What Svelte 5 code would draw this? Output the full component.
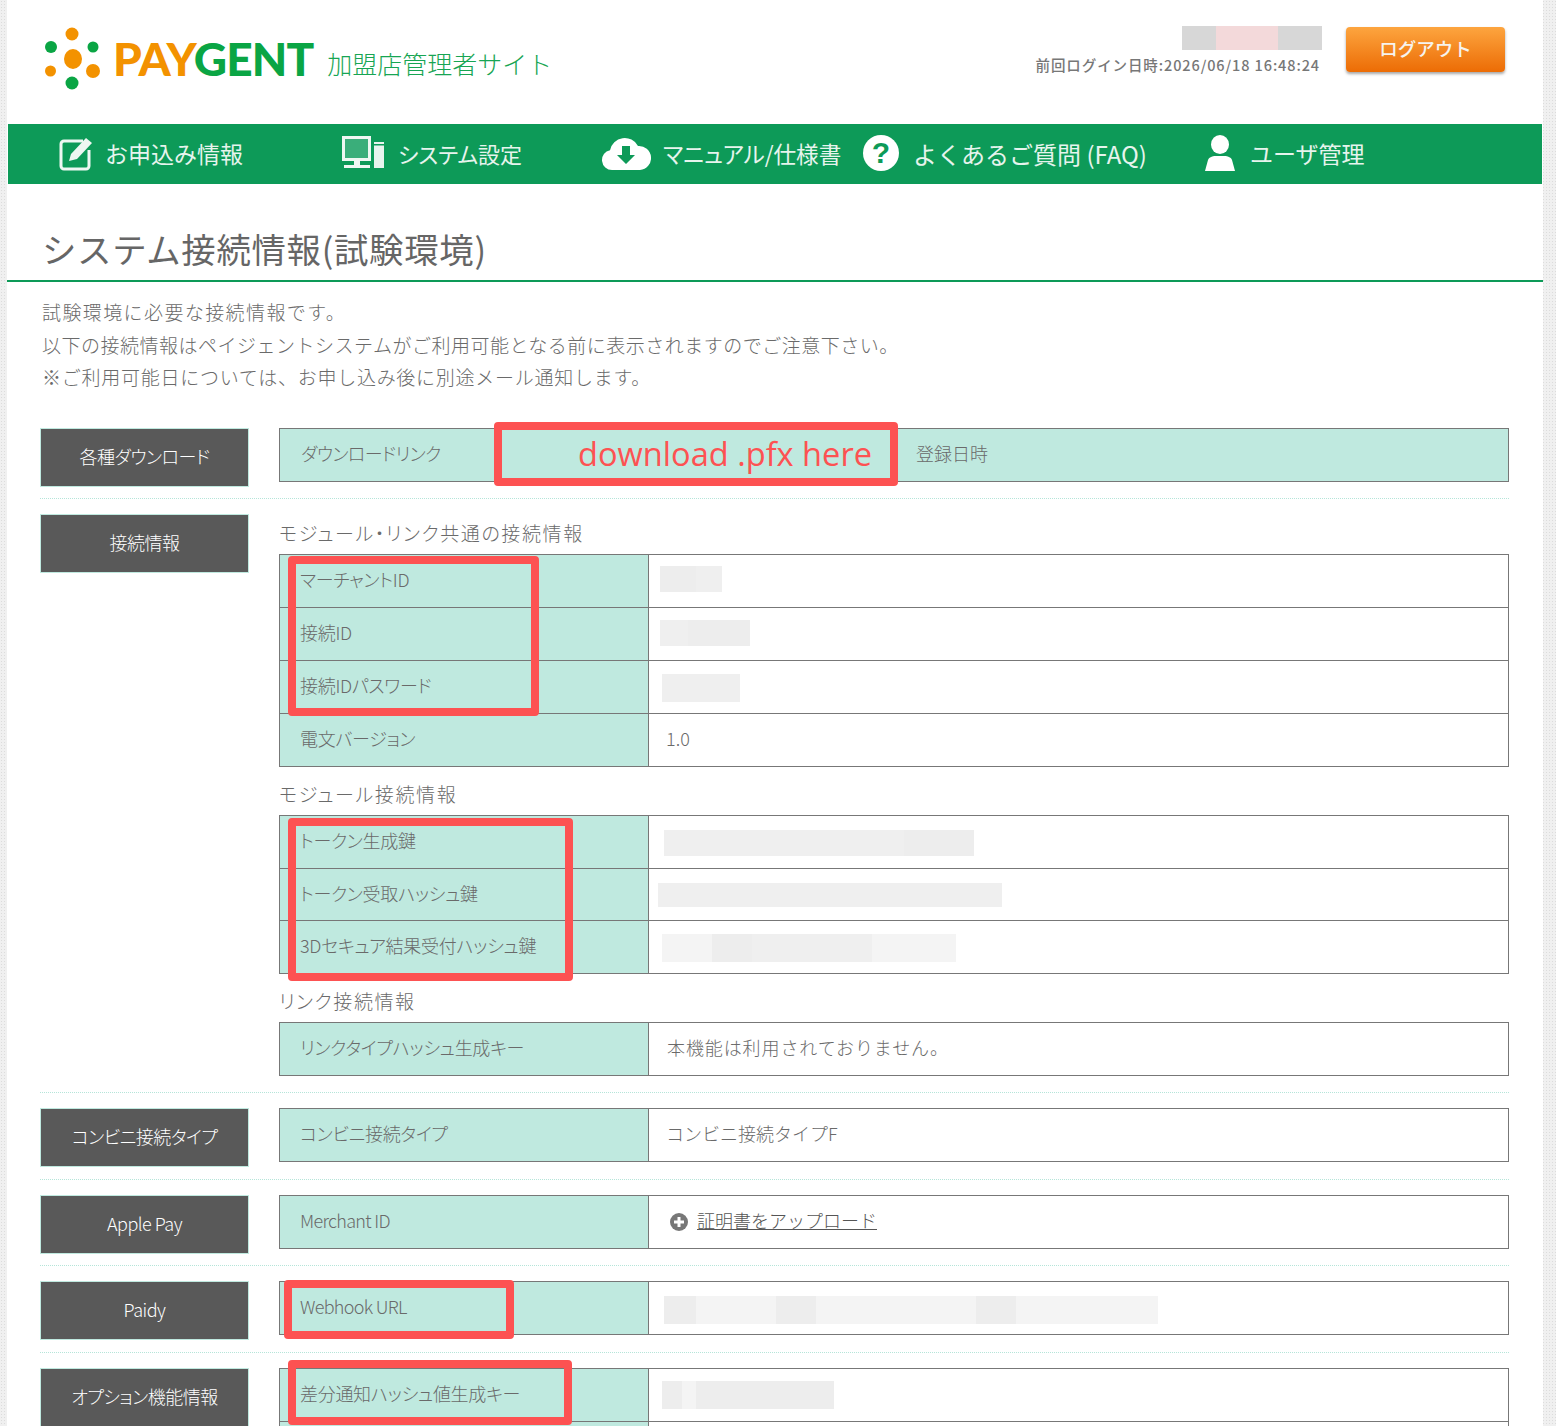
<script lang="ts">
	type Segment = { w: number; c: string };
	type Row = {
		label: string;
		value?: string;
		pad?: number;
		blur?: Segment[];
		h?: number;
		nudge?: number;
		short?: boolean;
		roomy?: boolean;
	};
	type Group = { title?: string; rows: Row[] };
	type Section = { name: string; gap: string; groups: Group[] };

	const G1 = '#efefef';
	const G2 = '#ededed';
	const G3 = '#f4f4f4';

	const sections: Section[] = [
		{
			name: '接続情報',
			gap: 'wide',
			groups: [
				{
					title: 'モジュール・リンク共通の接続情報',
					rows: [
						{ label: 'マーチャントID', pad: 11, h: 26, nudge: -2, blur: [{ w: 36, c: G2 }, { w: 26, c: G1 }] },
						{ label: '接続ID', pad: 11, h: 26, nudge: -1, blur: [{ w: 28, c: G1 }, { w: 62, c: G2 }] },
						{ label: '接続IDパスワード', pad: 13, h: 28, nudge: 1, blur: [{ w: 78, c: G1 }] },
						{ label: '電文バージョン', value: '1.0' }
					]
				},
				{
					title: 'モジュール接続情報',
					rows: [
						{ label: 'トークン生成鍵', pad: 15, h: 26, nudge: 1, blur: [{ w: 240, c: G1 }, { w: 70, c: G2 }] },
						{ label: 'トークン受取ハッシュ鍵', pad: 9, h: 24, short: true, blur: [{ w: 344, c: G1 }] },
						{
							label: '3Dセキュア結果受付ハッシュ鍵',
							pad: 13,
							h: 28,
							nudge: 1,
							blur: [{ w: 50, c: G3 }, { w: 40, c: G2 }, { w: 120, c: G1 }, { w: 84, c: G3 }]
						}
					]
				},
				{
					title: 'リンク接続情報',
					rows: [{ label: 'リンクタイプハッシュ生成キー', value: '本機能は利用されておりません。', roomy: true }]
				}
			]
		},
		{
			name: 'コンビニ接続タイプ',
			gap: 'normal',
			groups: [{ rows: [{ label: 'コンビニ接続タイプ', value: 'コンビニ接続タイプF' }] }]
		}
	];

	const paidyBlur: Segment[] = [
		{ w: 32, c: G2 },
		{ w: 80, c: G3 },
		{ w: 40, c: G2 },
		{ w: 160, c: G3 },
		{ w: 40, c: G2 },
		{ w: 142, c: G3 }
	];
	const optionBlur: Segment[] = [
		{ w: 20, c: G2 },
		{ w: 14, c: G3 },
		{ w: 138, c: G2 }
	];

	const navItems = ['edit', 'system', 'manual', 'faq', 'user'];
</script>

{#snippet redacted(pad: number, h: number, nudge: number, parts: Segment[])}
	<span class="redact" style={`margin-left:${pad}px;margin-top:${nudge * 2}px;height:${h}px`}>
		{#each parts as part}
			<span style={`width:${part.w}px;background:${part.c}`}></span>
		{/each}
	</span>
{/snippet}

{#snippet infoTable(rows: Row[])}
	<table class="info">
		<tbody>
			{#each rows as row}
				<tr class:short={row.short}>
					<th>{row.label}</th>
					<td>
						{#if row.blur}
							{@render redacted(row.pad ?? 0, row.h ?? 26, row.nudge ?? 0, row.blur)}
						{:else}
							<span class="value" class:roomy={row.roomy}>{row.value}</span>
						{/if}
					</td>
				</tr>
			{/each}
		</tbody>
	</table>
{/snippet}

<div class="page">
	<div class="wrap">
		<header class="top">
			<div class="logo">
				<svg class="dots" width="60" height="66" viewBox="0 0 60 66">
					<circle cx="28" cy="8" r="6.5" fill="#f39200" />
					<circle cx="7" cy="21" r="6" fill="#0aa544" />
					<circle cx="49" cy="21" r="5.5" fill="#0aa544" />
					<ellipse cx="29" cy="33" rx="9" ry="10" fill="#f39200" />
					<circle cx="6.5" cy="45" r="5.5" fill="#f39200" />
					<circle cx="49" cy="45" r="7" fill="#f39200" />
					<circle cx="28" cy="57" r="6.5" fill="#0aa544" />
				</svg>
				<span class="brand"><span class="pay">PAY</span><span class="gent">GENT</span></span>
				<span class="site">加盟店管理者サイト</span>
			</div>
			<div class="account">
				<div class="login">
					<div class="user-block">
						<span class="b1"></span><span class="b2"></span><span class="b3"></span>
					</div>
					<div class="last">前回ログイン日時:2026/06/18 16:48:24</div>
				</div>
				<button class="logout">ログアウト</button>
			</div>
		</header>

		<nav class="nav">
			{#each navItems as item}
				<a class={`nav-item ${item}`} href="#top">
					{#if item === 'edit'}
						<svg width="36" height="36" viewBox="0 0 36 36">
							<path d="M25 6H6a3 3 0 0 0-3 3v22a3 3 0 0 0 3 3h22a3 3 0 0 0 3-3V15" fill="none" stroke="#eef7f2" stroke-width="3" />
							<path d="M11 26l2-7L28 3l6 5-15 16z" fill="#eef7f2" />
						</svg>
						<span>お申込み情報</span>
					{:else if item === 'system'}
						<svg width="44" height="34" viewBox="0 0 44 34">
							<rect x="1.5" y="1.5" width="26" height="22" fill="#3aae7a" stroke="#eef7f2" stroke-width="3" />
							<path d="M12 25h6v4h-6zM2 29h26v3H2z" fill="#eef7f2" />
							<rect x="32" y="6" width="10" height="26" fill="#e8f4ee" />
							<rect x="32" y="8" width="10" height="1.5" fill="#0d9a58" />
						</svg>
						<span>システム設定</span>
					{:else if item === 'manual'}
						<svg width="50" height="36" viewBox="0 0 50 36">
							<path d="M11 35a10 10 0 0 1-2-19.800A15 15 0 0 1 37 11a12 12 0 0 1 2 24z" fill="#fff" />
							<path d="M21 11h8v9h5l-9 9-9-9h5z" fill="#0d9a58" />
						</svg>
						<span>マニュアル/仕様書</span>
					{:else if item === 'faq'}
						<svg width="36" height="36" viewBox="0 0 36 36">
							<circle cx="18" cy="18" r="18" fill="#fff" />
							<text x="18" y="28" text-anchor="middle" class="q">?</text>
						</svg>
						<span>よくあるご質問 (FAQ)</span>
					{:else}
						<svg width="32" height="36" viewBox="0 0 32 36">
							<ellipse cx="16" cy="9.500" rx="9" ry="9.500" fill="#fff" />
							<path d="M1 36l3-11c1-3 5-4 7-4h10c2 0 6 1 7 4l3 11z" fill="#fff" />
						</svg>
						<span>ユーザ管理</span>
					{/if}
				</a>
			{/each}
		</nav>

		<h1 class="title">システム接続情報(試験環境)</h1>

		<main class="content">
			<div class="intro">
				<p class="line-a">試験環境に必要な接続情報です。</p>
				<p class="line-b">以下の接続情報はペイジェントシステムがご利用可能となる前に表示されますのでご注意下さい。</p>
				<p class="line-c">※ご利用可能日については、お申し込み後に別途メール通知します。</p>
			</div>

			<section class="section snug">
				<div class="box">各種ダウンロード</div>
				<div class="body">
					<div class="download">
						<span class="dl-link">ダウンロードリンク</span>
						<span class="dl-date">登録日時</span>
					</div>
				</div>
			</section>

			{#each sections as section}
				<section class={`section ${section.gap}`}>
					<div class="box">{section.name}</div>
					<div class="body">
						{#each section.groups as group}
							{#if group.title}
								<h2 class="sub">{group.title}</h2>
							{/if}
							{@render infoTable(group.rows)}
						{/each}
					</div>
				</section>
			{/each}

			<section class="section snug">
				<div class="box">Apple Pay</div>
				<div class="body">
					<table class="info">
						<tbody>
							<tr>
								<th class="latin">Merchant ID</th>
								<td>
									<a class="upload" href="#top">
										<svg width="18" height="18" viewBox="0 0 18 18">
											<circle cx="9" cy="9" r="9" fill="#777" />
											<path d="M7.500 4h3v3.500H14v3h-3.500V14h-3v-3.500H4v-3h3.500z" fill="#fff" />
										</svg>
										<span>証明書をアップロード</span>
									</a>
								</td>
							</tr>
						</tbody>
					</table>
				</div>
			</section>

			<section class="section normal">
				<div class="box">Paidy</div>
				<div class="body">
					<table class="info">
						<tbody>
							<tr>
								<th class="latin">Webhook URL</th>
								<td>{@render redacted(15, 28, 2, paidyBlur)}</td>
							</tr>
						</tbody>
					</table>
				</div>
			</section>

			<section class="section normal">
				<div class="box">オプション機能情報</div>
				<div class="body">
					<table class="info">
						<tbody>
							<tr>
								<th>差分通知ハッシュ値生成キー</th>
								<td>{@render redacted(13, 28, 0, optionBlur)}</td>
							</tr>
							<tr>
								<th></th>
								<td></td>
							</tr>
						</tbody>
					</table>
				</div>
			</section>
		</main>
	</div>

	<div class="mark mark-download"><span>download .pfx here</span></div>
	<div class="mark mark-ids"></div>
	<div class="mark mark-keys"></div>
	<div class="mark mark-webhook"></div>
	<div class="mark mark-diff"></div>
</div>

<style>
	:global(body) {
		margin: 0;
		background-color: #f0f0f0;
		background-image: radial-gradient(#dcdcdc 1px, transparent 1px);
		background-size: 3px 3px;
	}

	.page {
		position: relative;
		height: 1426px;
		overflow: hidden;
		font-family: 'Noto Sans CJK JP', 'Noto Sans', sans-serif;
		font-weight: 300;
		color: #6a6a6a;
	}

	.wrap {
		width: 1536px;
		margin-left: 7px;
		height: 1426px;
		background: #fff;
	}

	/* header */
	.top {
		height: 124px;
		box-sizing: border-box;
		padding: 26px 38px 0 37px;
		display: flex;
		justify-content: space-between;
		align-items: flex-start;
	}

	.logo {
		display: flex;
		align-items: flex-start;
	}

	.dots {
		margin-right: 9px;
	}

	.brand {
		font-family: Lato, 'Noto Sans', sans-serif;
		font-weight: 900;
		font-size: 46px;
		line-height: 50px;
		letter-spacing: -0.9px;
		margin-top: 8px;
	}

	.pay {
		color: #f39200;
	}

	.gent {
		color: #0aa544;
	}

	.site {
		margin-left: 14px;
		margin-top: 19px;
		font-size: 25px;
		line-height: 36px;
		color: #17a553;
		white-space: nowrap;
	}

	.account {
		display: flex;
		align-items: flex-start;
		gap: 24px;
	}

	.login {
		display: flex;
		flex-direction: column;
		align-items: flex-end;
	}

	.user-block {
		display: flex;
		height: 24px;
		width: 140px;
	}

	.user-block span {
		display: block;
	}

	.b1 {
		width: 34px;
		background: #d7d7d7;
	}

	.b2 {
		width: 62px;
		background: #f3d9da;
	}

	.b3 {
		width: 44px;
		background: #d7d7d7;
	}

	.last {
		margin-top: 4px;
		margin-right: 2px;
		font-size: 14.500px;
		line-height: 22px;
		font-weight: 500;
		letter-spacing: 0.9px;
		color: #777;
		white-space: nowrap;
	}

	.logout {
		width: 159px;
		height: 45px;
		margin-top: 1px;
		padding: 0 0 4px;
		border: 0;
		border-radius: 4px;
		background: linear-gradient(#fda53f, #ec6c05);
		box-shadow: 0 2px 3px rgba(0, 0, 0, 0.35);
		color: #f6f3ee;
		font-family: inherit;
		font-size: 18.500px;
		font-weight: 500;
	}

	/* nav */
	.nav {
		height: 60px;
		margin: 0 1px;
		box-sizing: border-box;
		padding: 0 0 2px 50px;
		background: #0d9a58;
		display: flex;
		align-items: center;
	}

	.nav-item {
		display: flex;
		align-items: center;
		color: #e6f4ed;
		text-decoration: none;
		font-size: 23px;
		font-weight: 400;
		white-space: nowrap;
	}

	.nav-item svg {
		flex: none;
	}

	.edit {
		width: 283px;
		gap: 11px;
	}

	.system {
		width: 260px;
		gap: 12px;
		font-size: 22px;
		font-feature-settings: 'palt';
	}

	.system svg {
		margin-left: 1px;
	}

	.manual {
		width: 262px;
		gap: 12px;
		font-size: 22.600px;
		font-feature-settings: 'palt';
	}

	.faq {
		width: 341px;
		gap: 14px;
		font-size: 24px;
	}

	.user {
		gap: 14px;
	}

	.q {
		font-family: 'Liberation Sans', sans-serif;
		font-size: 30px;
		font-weight: 700;
		fill: #0d9a58;
	}

	/* title */
	.title {
		margin: 0;
		height: 98px;
		box-sizing: border-box;
		padding: 40px 0 0 35px;
		border-bottom: 2px solid #0d9a58;
		font-size: 34.400px;
		line-height: 48px;
		font-weight: 400;
		letter-spacing: 0.7px;
		color: #666;
	}

	.content {
		padding: 14px 34px 0 33px;
	}

	.intro {
		margin: 0 0 34.500px;
		padding-left: 2px;
		font-size: 19px;
		line-height: 32.500px;
	}

	.intro p {
		margin: 0;
	}

	.line-a {
		letter-spacing: 1.4px;
	}

	.line-b {
		letter-spacing: 0.5px;
	}

	.line-c {
		letter-spacing: 0.74px;
	}

	/* sections */
	.section {
		display: flex;
		border-bottom: 1px dotted #b5e5d9;
		margin-bottom: 15px;
	}

	.snug {
		padding-bottom: 11px;
	}

	.normal {
		padding-bottom: 12px;
	}

	.wide {
		padding-bottom: 16px;
	}

	.section:last-child {
		border-bottom: 0;
	}

	.box {
		flex: none;
		box-sizing: border-box;
		width: 209px;
		height: 59px;
		margin-right: 30px;
		border: 1px solid #bfe9df;
		background: #595959;
		color: #fff;
		font-size: 18px;
		font-feature-settings: 'palt';
		letter-spacing: -0.5px;
		line-height: 54px;
		text-align: center;
	}

	.body {
		flex: 1;
		min-width: 0;
	}

	.sub {
		margin: 7px 0 1px;
		height: 40px;
		font-size: 19px;
		line-height: 40px;
		font-weight: 300;
		font-feature-settings: 'palt';
		letter-spacing: 1.6px;
	}

	.sub:first-child {
		margin-top: -1px;
	}

	.download {
		box-sizing: border-box;
		height: 54px;
		border: 1px solid #777;
		background: #bfe9df;
		display: flex;
		align-items: center;
		padding-bottom: 4px;
		font-size: 18px;
	}

	.dl-link {
		margin-left: 21px;
		width: 615px;
		font-feature-settings: 'palt';
		letter-spacing: -0.6px;
	}

	.info {
		width: 100%;
		border-collapse: collapse;
		table-layout: fixed;
		font-size: 18px;
	}

	.info th,
	.info td {
		height: 53px;
		box-sizing: border-box;
		padding: 0;
		border: 1px solid #777;
		font-weight: 300;
		vertical-align: middle;
	}

	.info .short th,
	.info .short td {
		height: 52px;
	}

	.info th {
		width: 369px;
		background: #bfe9df;
		text-align: left;
		padding: 0 0 4px 20px;
		font-feature-settings: 'palt';
		letter-spacing: -0.3px;
		white-space: nowrap;
	}

	.info .latin {
		letter-spacing: -0.7px;
	}

	.redact {
		display: flex;
		width: max-content;
	}

	.redact span {
		display: block;
		height: 100%;
	}

	.value {
		display: inline-block;
		margin: 0 0 4px 17px;
	}

	.roomy {
		letter-spacing: 0.9px;
		margin-left: 18px;
	}

	.upload {
		display: inline-flex;
		align-items: center;
		gap: 9px;
		margin-left: 21px;
		color: #555;
	}

	.upload span {
		margin-bottom: 5px;
	}

	/* red annotations pasted over the screenshot */
	.mark {
		position: absolute;
		box-sizing: border-box;
		border: 8px solid #fd5252;
		border-radius: 4px;
	}

	.mark-download {
		left: 494px;
		top: 422px;
		width: 404px;
		height: 64px;
		display: flex;
		align-items: center;
		justify-content: flex-end;
		padding: 0 18px 2px 0;
	}

	.mark-download span {
		font-family: 'Open Sans', sans-serif;
		font-size: 32.600px;
		font-weight: 400;
		color: #fd5252;
		white-space: nowrap;
	}

	.mark-ids {
		left: 288px;
		top: 556px;
		width: 251px;
		height: 160px;
	}

	.mark-keys {
		left: 288px;
		top: 818px;
		width: 285px;
		height: 163px;
	}

	.mark-webhook {
		left: 284px;
		top: 1280px;
		width: 230px;
		height: 59px;
	}

	.mark-diff {
		left: 288px;
		top: 1360px;
		width: 284px;
		height: 65px;
	}
</style>
